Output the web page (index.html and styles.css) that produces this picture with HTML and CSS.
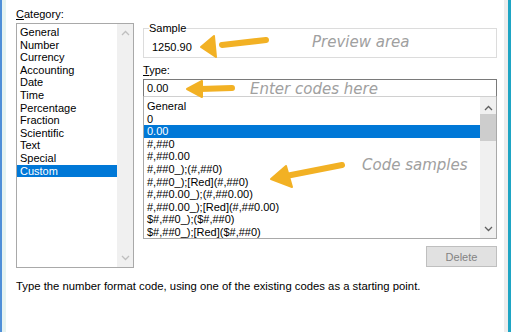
FILE: index.html
```html
<!DOCTYPE html>
<html lang="en">
<head>
  <meta charset="UTF-8" />
  <title>Format Cells - Custom</title>
  <link rel="stylesheet" href="styles.css">
</head>
<body>
  <div class="window">
    <div class="frame-left"></div>
    <div class="dialog">
      <div class="panes">
        <div class="category">
          <div class="label"><u>C</u>ategory:</div>
          <div class="listbox cat-list">
            <ul class="items">
              <li>General</li>
              <li>Number</li>
              <li>Currency</li>
              <li>Accounting</li>
              <li>Date</li>
              <li>Time</li>
              <li>Percentage</li>
              <li>Fraction</li>
              <li>Scientific</li>
              <li>Text</li>
              <li>Special</li>
              <li class="selected">Custom</li>
            </ul>
            <div class="vscroll disabled">
              <svg class="arrow" width="9" height="6" viewBox="0 0 9 6"><polyline points="1,5 4.5,1.5 8,5" /></svg>
              <div class="track"></div>
              <svg class="arrow" width="9" height="6" viewBox="0 0 9 6"><polyline points="1,1 4.5,4.5 8,1" /></svg>
            </div>
          </div>
        </div>

        <div class="details">
          <fieldset class="sample">
            <legend>Sample</legend>
            <div class="sample-value">1250.90</div>
          </fieldset>

          <div class="label type-label"><u>T</u>ype:</div>
          <div class="type-input">0.00</div>

          <div class="listbox code-list">
            <ul class="items">
              <li>General</li>
              <li>0</li>
              <li class="selected">0.00</li>
              <li>#,##0</li>
              <li>#,##0.00</li>
              <li>#,##0_);(#,##0)</li>
              <li>#,##0_);[Red](#,##0)</li>
              <li>#,##0.00_);(#,##0.00)</li>
              <li>#,##0.00_);[Red](#,##0.00)</li>
              <li>$#,##0_);($#,##0)</li>
              <li>$#,##0_);[Red]($#,##0)</li>
            </ul>
            <div class="vscroll">
              <svg class="arrow" width="9" height="6" viewBox="0 0 9 6"><polyline points="1,5 4.5,1.5 8,5" /></svg>
              <div class="track"><div class="thumb"></div></div>
              <svg class="arrow" width="9" height="6" viewBox="0 0 9 6"><polyline points="1,1 4.5,4.5 8,1" /></svg>
            </div>
          </div>

          <div class="actions">
            <button class="btn" disabled>Delete</button>
          </div>
        </div>
      </div>

      <p class="hint">Type the number format code, using one of the existing codes as a starting point.</p>
    </div>
    <div class="frame-right"></div>
  </div>

  <!-- annotations drawn over the dialog -->
  <svg class="arrows" width="514" height="332" viewBox="0 0 514 332">
    <line x1="222" y1="45" x2="266" y2="40" />
    <polygon points="201,47 214,36 216,57" />
    <line x1="200" y1="89" x2="232" y2="88" />
    <polygon points="187,89 202,81 202,97" />
    <line x1="286" y1="176" x2="342" y2="165" />
    <polygon points="271,179 286,166 292,187" />
  </svg>
  <span class="note note-preview">Preview area</span>
  <span class="note note-enter">Enter codes here</span>
  <span class="note note-codes">Code samples</span>
</body>
</html>
```

FILE: styles.css
```css
body {
  margin: 0;
  background-color: #fff;
  font-family: "Liberation Sans", Arial, sans-serif;
  font-size: 11px;
  color: #000;
}
.window {
  display: flex;
  width: 514px;
  height: 332px;
  border-left: 2px solid #4f8fd8;
  box-sizing: border-box;
}
.frame-left {
  width: 4px;
  background-color: #e6f3f1;
}
.frame-right {
  width: 4px;
  background-color: #ededed;
  border-right: 3px solid #1ea5c4;
  margin-right: 3px;
}
.dialog {
  flex: 1;
  padding: 7px 7px 0 10px;
}
.panes {
  display: flex;
  gap: 9px;
}
.label {
  line-height: 15px;
  height: 15px;
}
.category {
  width: 118px;
}
.details {
  flex: 1;
}

/* list boxes */
.listbox {
  display: flex;
  border: 1px solid #a9a9a9;
  background-color: #fff;
  box-sizing: border-box;
}
.cat-list {
  margin-top: 1px;
  height: 245px;
}
.items {
  list-style: none;
  margin: 0;
  padding: 2px 0 0 0;
  flex: 1;
}
.items li {
  height: 12.6px;
  line-height: 12.6px;
  padding-left: 3px;
  white-space: nowrap;
}
.items li.selected {
  background-color: #0078d7;
  color: #fff;
}
.vscroll {
  width: 16px;
  background-color: #f0f0f0;
  display: flex;
  flex-direction: column;
  align-items: center;
  padding: 6px 0;
}
.vscroll .track {
  flex: 1;
  width: 100%;
  padding-top: 3px;
}
.vscroll .thumb {
  height: 27px;
  background-color: #cdcdcd;
}
.arrow polyline {
  fill: none;
  stroke: #606060;
  stroke-width: 1.3;
}
.disabled .arrow polyline {
  stroke: #bfbfbf;
}

/* sample box */
.sample {
  margin: 14px 0 0 0;
  padding: 0 0 2px 5px;
  border: 1px solid #dcdcdc;
  height: 37px;
  box-sizing: border-box;
}
.sample legend {
  padding: 0;
  line-height: 15px;
}
.sample-value {
  line-height: 15px;
  padding: 4px 0 0 3px;
}
.type-label {
  margin-top: 5px;
}
.type-input {
  margin-top: 1px;
  height: 18px;
  box-sizing: border-box;
  border: 1px solid #7a7a7a;
  border-bottom-color: #d0d0d0;
  line-height: 16px;
  padding-left: 3px;
}
.code-list {
  height: 142px;
  border-top: none;
}
.code-list .items {
  padding-top: 3px;
}
.code-list .vscroll {
  padding-top: 8px;
}

.actions {
  display: flex;
  justify-content: flex-end;
  margin-top: 7px;
}
.btn {
  width: 71px;
  height: 21px;
  border: 1px solid #bfbfbf;
  background-color: #e1e1e1;
  color: #838383;
  font-family: inherit;
  font-size: 11px;
  padding: 0;
}
.hint {
  margin: 11px 0 0 0;
  line-height: 15px;
  font-size: 11.3px;
}

/* annotations */
.arrows {
  position: absolute;
  left: 0;
  top: 0;
}
.arrows line {
  stroke: #f2b124;
  stroke-width: 6;
  stroke-linecap: round;
}
.arrows polygon {
  fill: #f2b124;
  stroke: #f2b124;
  stroke-width: 2;
  stroke-linejoin: round;
}
.note {
  position: absolute;
  font-family: "DejaVu Sans", sans-serif;
  font-style: italic;
  font-weight: 300;
  font-size: 15px;
  color: #a0a0a0;
  line-height: 18px;
  white-space: nowrap;
}
.note-preview {
  left: 312px;
  top: 33px;
}
.note-enter {
  left: 250px;
  top: 80px;
}
.note-codes {
  left: 362px;
  top: 156px;
}
```
